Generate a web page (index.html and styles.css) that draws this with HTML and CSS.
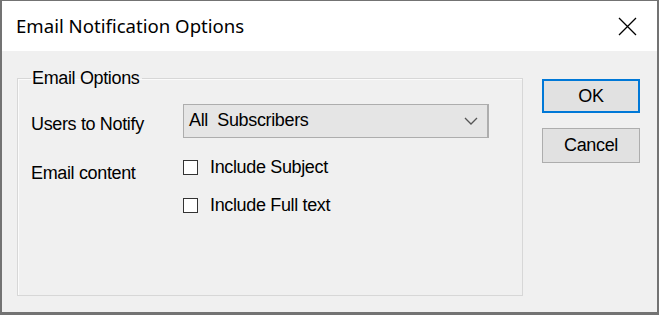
FILE: index.html
```html
<!DOCTYPE html>
<html lang="en">
<head>
    <meta charset="UTF-8">
    <title>Email Notification Options</title>
    <link rel="stylesheet" href="styles.css">
</head>
<body>
    <div class="window">
        <!-- Title bar -->
        <div class="titlebar">
            <span class="title">Email Notification Options</span>
            <svg class="close" width="19" height="19" viewBox="0 0 19 19">
                <path d="M1 1 L18 18 M18 1 L1 18" stroke="#000" stroke-width="1.3" fill="none"/>
            </svg>
        </div>

        <div class="content">
            <fieldset class="groupbox">
                <legend>Email Options</legend>
                <div class="form-grid">
                    <span class="label label-users">Users to Notify</span>
                    <div class="combo">
                        <span>All&nbsp; Subscribers</span>
                        <svg width="14" height="8" viewBox="0 0 14 8">
                            <polyline points="1,1 7,7 13,1" stroke="#555" stroke-width="1.3" fill="none"/>
                        </svg>
                    </div>

                    <span class="label label-content">Email content</span>
                    <div class="checks">
                        <label class="check"><span class="box"></span>Include Subject</label>
                        <label class="check"><span class="box"></span>Include Full text</label>
                    </div>
                </div>
            </fieldset>

            <div class="buttons">
                <button class="btn btn-default">OK</button>
                <button class="btn">Cancel</button>
            </div>
        </div>
    </div>
</body>
</html>
```

FILE: styles.css
```css
html, body {
    margin: 0;
    padding: 0;
}
body {
    width: 659px;
    height: 315px;
    overflow: hidden;
    font-family: 'Liberation Sans', Arial, sans-serif;
    font-size: 18px;
    letter-spacing: -0.35px;
    color: #000;
}
.window {
    box-sizing: border-box;
    width: 659px;
    height: 315px;
    border: 2px solid #737373;
    border-top-width: 1px;
    border-bottom-width: 3px;
    background-color: #f0f0f0;
    display: flex;
    flex-direction: column;
}
.titlebar {
    height: 50px;
    background-color: #fff;
    display: flex;
    align-items: center;
    justify-content: space-between;
    padding: 0 14px 0 14px;
    flex-shrink: 0;
}
.title {
    font-family: 'Noto Sans', 'Open Sans', sans-serif;
    font-size: 18.6px;
    letter-spacing: 0;
    padding-bottom: 1px;
}
.close {
    margin-right: 6px;
}
.content {
    flex: 1;
    display: flex;
    align-items: flex-start;
    padding: 17px 0 0 15px;
}
.groupbox {
    box-sizing: border-box;
    width: 506px;
    height: 228px;
    margin: 0;
    padding: 13px 12px 0 13px;
    border: 1px solid #d7d7d7;
    box-shadow: inset 1px 1px 0 #fbfbfb;
}
.groupbox legend {
    margin-left: 0;
    padding: 0 2px 0 1px;
    line-height: 20px;
}
.form-grid {
    display: grid;
    grid-template-columns: 152px 306px;
}
.label {
    line-height: 20px;
}
.label-users {
    margin-top: 13px;
}
.label-content {
    margin-top: 25px;
}
.combo {
    box-sizing: border-box;
    height: 34px;
    margin-top: 3px;
    border: 1px solid #adadad;
    border-right-width: 2px;
    background-color: #e5e5e5;
    display: flex;
    align-items: center;
    justify-content: space-between;
    padding: 0 9px 0 5px;
}
.combo span {
    margin-top: -1px;
}
.checks {
    display: flex;
    flex-direction: column;
    gap: 17px;
    padding-top: 19px;
}
.check {
    display: flex;
    align-items: center;
    line-height: 21px;
}
.box {
    box-sizing: border-box;
    width: 15px;
    height: 15px;
    border: 1px solid #333;
    background-color: #fff;
    margin-right: 12px;
}
.buttons {
    display: flex;
    flex-direction: column;
    gap: 15px;
    margin-left: 19px;
    margin-top: 11px;
}
.btn {
    box-sizing: border-box;
    width: 98px;
    height: 35px;
    font-family: 'Liberation Sans', Arial, sans-serif;
    font-size: 18px;
    letter-spacing: -0.35px;
    background-color: #e1e1e1;
    border: 1px solid #adadad;
    padding: 0;
    color: #000;
}
.btn-default {
    border: 2px solid #0078d7;
    height: 34px;
}
```
